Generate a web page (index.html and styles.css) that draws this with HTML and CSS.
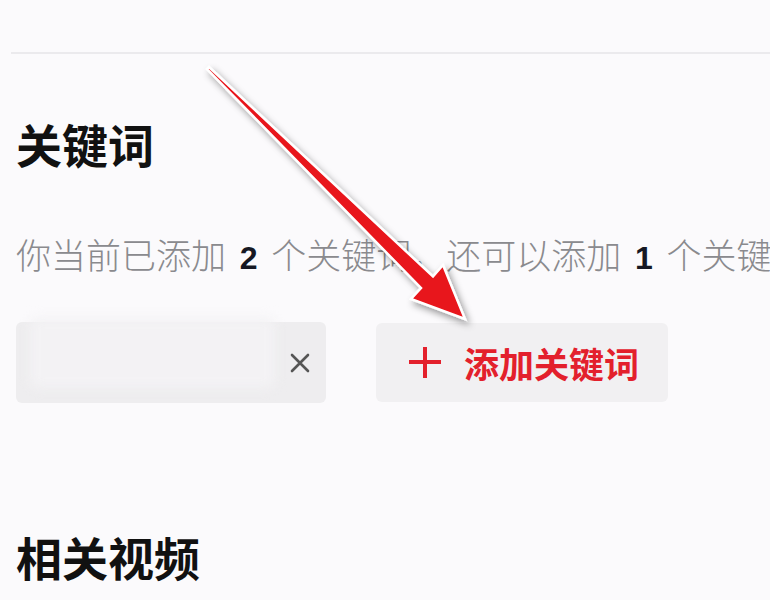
FILE: index.html
```html
<!DOCTYPE html>
<html lang="zh">
<head>
<meta charset="utf-8">
<link rel="stylesheet" href="styles.css">
</head>
<body>
<div class="page">
  <div class="topbar"></div>
  <section class="section">
    <h2 class="title">关键词</h2>
    <p class="hint">你当前已添加 <b>2</b> 个关键词，还可以添加 <b>1</b> 个关键词</p>
    <div class="chips">
      <div class="chip">
        <div class="chip-blur"></div>
        <svg class="chip-x" width="20" height="20" viewBox="0 0 20 20"><path d="M2 2L18 18M18 2L2 18" stroke="#555" stroke-width="2.6" stroke-linecap="round"/></svg>
      </div>
      <button class="add">
        <svg class="add-plus" width="34" height="32" viewBox="0 0 34 32"><path d="M1 15H33M17 0V31" stroke="#e3202c" stroke-width="4"/></svg>
        <span>添加关键词</span>
      </button>
    </div>
  </section>
  <section class="section">
    <h2 class="title title-2">相关视频</h2>
  </section>
  <svg class="arrow" width="770" height="600" viewBox="0 0 770 600">
    <defs>
      <filter id="sh" x="-20%" y="-20%" width="140%" height="140%">
        <feDropShadow dx="3" dy="4" stdDeviation="3.5" flood-color="#000" flood-opacity="0.4"/>
      </filter>
    </defs>
    <polygon points="209,67 433,276.5 443,265 465,319 411,299 421,288 207,69" fill="#e8141a" stroke="#fff" stroke-width="2.5" stroke-linejoin="miter" filter="url(#sh)"/>
  </svg>
</div>
</body>
</html>
```
FILE: styles.css
```css
html, body {
  margin: 0;
  padding: 0;
  background: #fbfafc;
  overflow: hidden;
}
.page {
  position: relative;
  width: 770px;
  height: 600px;
  overflow: hidden;
  font-family: "Noto Sans CJK SC", "Noto Sans", sans-serif;
}
.topbar {
  margin-left: 11px;
  height: 52px;
  border-bottom: 2px solid #ebeaed;
}
.section {
  padding-left: 16px;
}
.title {
  margin: 66px 0 0;
  font-size: 46px;
  line-height: 46px;
  font-weight: 700;
  color: #111;
}
.hint {
  margin: 70px 0 0;
  height: 35px;
  font-size: 35px;
  line-height: 35px;
  font-weight: 300;
  color: #8a8a8e;
  white-space: nowrap;
}
.hint b {
  color: #161823;
  font-weight: 700;
  font-family: "Liberation Sans", "Noto Sans CJK SC", sans-serif;
  font-size: 32px;
  line-height: 1;
  margin: 0 6px;
}
.chips {
  display: flex;
  gap: 50px;
  margin-top: 51px;
  align-items: center;
}
.chip {
  position: relative;
  width: 310px;
  height: 81px;
  border-radius: 6px;
  background: #eeedef;
  display: flex;
  align-items: center;
  justify-content: flex-end;
  padding-right: 16px;
  box-sizing: border-box;
}
.chip-blur {
  position: absolute;
  left: 14px;
  top: -4px;
  width: 245px;
  height: 70px;
  background: #f3f2f4;
  filter: blur(6px);
  border-radius: 6px;
}
.chip-x {
  position: relative;
  width: 20px;
  height: 20px;
}
.add {
  width: 292px;
  height: 79px;
  border: none;
  border-radius: 6px;
  background: #f1f0f2;
  display: flex;
  align-items: center;
  padding: 0 0 0 32px;
  gap: 22px;
  font-family: "Noto Sans CJK SC", sans-serif;
  font-size: 35px;
  font-weight: 700;
  color: #e3202c;
}
.add-plus {
  width: 34px;
  height: 32px;
}
.title-2 {
  margin-top: 130px;
}
.arrow {
  position: absolute;
  left: 0;
  top: 0;
  pointer-events: none;
}
```
